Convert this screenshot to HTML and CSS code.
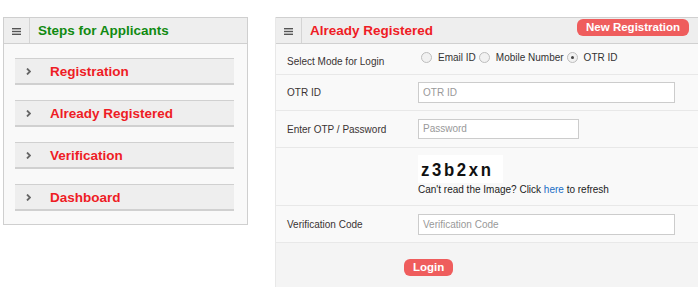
FILE: index.html
```html
<!DOCTYPE html>
<html>
<head>
<meta charset="utf-8">
<link rel="stylesheet" href="styles.css">
</head>
<body>
<div class="page">
  <div class="steps">
    <div class="ph">
      <div class="burger"><svg width="9" height="7" viewBox="0 0 9 7"><rect y="0" width="9" height="1.4" fill="#555"/><rect y="2.8" width="9" height="1.4" fill="#555"/><rect y="5.6" width="9" height="1.4" fill="#555"/></svg></div>
      <div class="ptitle green">Steps for Applicants</div>
    </div>
    <div class="steps-body">
      <div class="step"><svg class="chev" width="5" height="7" viewBox="0 0 5 7"><path d="M1 0.5 L4 3.5 L1 6.5" stroke="#666" stroke-width="1.8" fill="none"/></svg><span>Registration</span></div>
      <div class="step"><svg class="chev" width="5" height="7" viewBox="0 0 5 7"><path d="M1 0.5 L4 3.5 L1 6.5" stroke="#666" stroke-width="1.8" fill="none"/></svg><span>Already Registered</span></div>
      <div class="step"><svg class="chev" width="5" height="7" viewBox="0 0 5 7"><path d="M1 0.5 L4 3.5 L1 6.5" stroke="#666" stroke-width="1.8" fill="none"/></svg><span>Verification</span></div>
      <div class="step"><svg class="chev" width="5" height="7" viewBox="0 0 5 7"><path d="M1 0.5 L4 3.5 L1 6.5" stroke="#666" stroke-width="1.8" fill="none"/></svg><span>Dashboard</span></div>
    </div>
  </div>
  <div class="login">
    <div class="ph">
      <div class="burger"><svg width="9" height="7" viewBox="0 0 9 7"><rect y="0" width="9" height="1.4" fill="#555"/><rect y="2.8" width="9" height="1.4" fill="#555"/><rect y="5.6" width="9" height="1.4" fill="#555"/></svg></div>
      <div class="ptitle red">Already Registered</div>
      <div class="newreg">New Registration</div>
    </div>
    <div class="row r1">
      <div class="lbl lbl1">Select Mode for Login</div>
      <div class="radios">
        <span class="radio"></span><span class="rtext">Email ID</span>
        <span class="radio"></span><span class="rtext">Mobile Number</span>
        <span class="radio on"></span><span class="rtext">OTR ID</span>
      </div>
    </div>
    <div class="row r2">
      <div class="lbl">OTR ID</div>
      <div class="inp wide">OTR ID</div>
    </div>
    <div class="row r3">
      <div class="lbl">Enter OTP / Password</div>
      <div class="inp short">Password</div>
    </div>
    <div class="row r4">
      <div class="lbl"></div>
      <div class="cap">
        <div class="capimg"><span class="captxt">z3b2xn</span></div>
        <div class="captext">Can't read the Image? Click <span class="link">here</span> to refresh</div>
      </div>
    </div>
    <div class="row r5">
      <div class="lbl">Verification Code</div>
      <div class="inp wide">Verification Code</div>
    </div>
    <div class="foot">
      <div class="btn">Login</div>
    </div>
  </div>
</div>
</body>
</html>
```
FILE: styles.css
```css
html, body { margin: 0; padding: 0; background: #fff; }
body { font-family: "Liberation Sans", Arial, sans-serif; color: #333; }
.page { display: flex; align-items: flex-start; padding: 17px 0 0 3px; gap: 27px; height: 270px; overflow: hidden; }
.steps { width: 243px; height: 206px; border: 1px solid #cfcfcf; background: #f9f9f9; flex: none; }
.ph { display: flex; align-items: center; height: 25px; background: #eeeeee; border-top: 1px solid #d0d0d0; border-bottom: 1px solid #d0d0d0; }
.steps .ph { border-top: 0; }
.burger { width: 25px; height: 25px; border-right: 1px solid #d4d4d4; display: flex; align-items: center; justify-content: center; flex: none; }
.burger svg { display: block; margin-top: 1px; }
.ptitle { font-weight: bold; font-size: 13.5px; padding-left: 8px; }
.green { color: #118a11; }
.red { color: #ee1c25; }
.steps-body { padding: 14px 13px 0 11px; display: flex; flex-direction: column; gap: 15px; }
.step { height: 24px; background: #eeeeee; border-top: 1px solid #d0d0d0; border-bottom: 2px solid #d0d0d0; display: flex; align-items: center; font-weight: bold; font-size: 13.5px; color: #ee1c25; }
.chev { margin-left: 11px; margin-right: 19px; display: block; }
.login { flex: 1; background: #f9f9f9; border-left: 1px solid #e8e8e8; height: 270px; }
.login .burger { width: 25px; }
.newreg { margin-left: auto; margin-right: 9px; align-self: flex-start; margin-top: 1px; height: 17px; line-height: 17px; padding: 0 9px; background: #ef5d5d; color: #fff; font-weight: bold; font-size: 11.5px; border-radius: 6px; }
.row { display: flex; align-items: center; border-bottom: 1px solid #e8e8e8; font-size: 10px; }
.lbl { width: 131px; padding-left: 11px; flex: none; color: #3a3333; }
.r1 { height: 30px; align-items: flex-start; }
.lbl1 { margin-top: 12px; }
.radios { display: flex; align-items: center; margin-top: 8px; color: #333; }
.radio { width: 9px; height: 9px; border: 1px solid #bdbdbd; border-radius: 50%; background: #f1f1f1; margin: 0 6px 0 3px; position: relative; box-sizing: content-box; }
.radio.on::after { content: ""; position: absolute; left: 3px; top: 3px; width: 3px; height: 3px; border-radius: 50%; background: #444; }
.r2 { height: 35px; }
.r3 { height: 36px; }
.r4 { height: 57px; align-items: flex-start; }
.r5 { height: 36px; }
.inp { height: 19px; line-height: 19px; border: 1px solid #cccccc; background: #fff; color: #999; padding-left: 4px; box-sizing: content-box; }
.wide { width: 251px; }
.r3 .inp { height: 18px; line-height: 18px; }
.short { width: 155px; }
.cap { padding-top: 7px; }
.capimg { width: 85px; height: 28px; background: #fff; box-sizing: border-box; padding-left: 3px; overflow: hidden; }
.captxt { display: inline-block; font-weight: bold; font-size: 19px; letter-spacing: 3px; color: #111; line-height: 30px; transform: scaleX(0.88); transform-origin: left center; }
.captext { font-size: 10px; color: #222; margin-top: 1px; line-height: 12px; }
.link { color: #1a6ec5; }
.foot { background: #f4f4f4; height: 60px; padding-left: 128px; padding-top: 14px; box-sizing: border-box; }
.btn { display: inline-block; height: 17px; line-height: 17px; padding: 0 9px; background: #ef5d5d; color: #fff; font-weight: bold; font-size: 11.5px; border-radius: 6px; }
```
